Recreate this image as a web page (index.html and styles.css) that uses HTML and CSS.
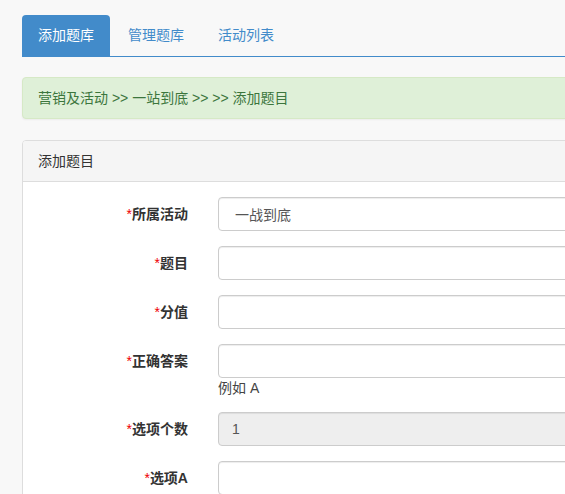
FILE: index.html
```html
<!DOCTYPE html>
<html>
<head>
  <meta charset="UTF-8">
  <title>添加题目</title>
  <link rel="stylesheet" href="styles.css">
</head>
<body>
  <div class="page">
    <ul class="tabs">
      <li class="active"><a href="#">添加题库</a></li>
      <li><a href="#">管理题库</a></li>
      <li><a href="#">活动列表</a></li>
    </ul>

    <div class="alert">营销及活动 &gt;&gt; 一站到底 &gt;&gt; &gt;&gt; 添加题目</div>

    <div class="panel">
      <div class="panel-heading">添加题目</div>
      <div class="panel-body">
        <form class="form">
          <div class="form-group">
            <label><span class="req">*</span>所属活动</label>
            <div class="field"><input type="text" value="一战到底"></div>
          </div>
          <div class="form-group">
            <label><span class="req">*</span>题目</label>
            <div class="field"><input type="text"></div>
          </div>
          <div class="form-group">
            <label><span class="req">*</span>分值</label>
            <div class="field"><input type="text"></div>
          </div>
          <div class="form-group">
            <label><span class="req">*</span>正确答案</label>
            <div class="field">
              <input type="text">
              <div class="help">例如 A</div>
            </div>
          </div>
          <div class="form-group">
            <label><span class="req">*</span>选项个数</label>
            <div class="field"><input type="text" value="1" disabled></div>
          </div>
          <div class="form-group">
            <label><span class="req">*</span>选项A</label>
            <div class="field"><input type="text"></div>
          </div>
        </form>
      </div>
    </div>
  </div>
</body>
</html>
```

FILE: styles.css
```css
html, body { margin: 0; overflow: hidden; }
body {
  font-family: "Liberation Sans", "Noto Sans CJK SC", sans-serif;
  font-size: 14px;
  line-height: 20px;
  color: #333;
  background: #f8f8f8;
}
.page { width: 1100px; padding: 15px 0 0 22px; }

.tabs { list-style: none; margin: 0; padding: 0; display: flex; border-bottom: 1px solid #428bca; }
.tabs li { margin-right: 2px; }
.tabs a { display: block; padding: 10px 16px 11px; color: #428bca; text-decoration: none; border-radius: 4px 4px 0 0; }
.tabs .active a { background: #428bca; color: #fff; }

.alert {
  margin-top: 20px;
  padding: 10px 15px;
  background: #dff0d8;
  border: 1px solid #d6e9c6;
  border-radius: 4px;
  color: #3c763d;
  box-shadow: 0 1px 2px rgba(0, 0, 0, 0.05);
}

.panel { margin-top: 21px; background: #fff; border: 1px solid #ddd; border-radius: 4px; }
.panel-heading { padding: 10px 15px; background: #f5f5f5; border-bottom: 1px solid #ddd; border-radius: 3px 3px 0 0; }
.panel-body { padding: 15px; }

.form-group { display: grid; grid-template-columns: 150px 1fr; column-gap: 30px; margin-bottom: 15px; }
.form-group label { text-align: right; font-weight: bold; padding-top: 7px; }
.req { color: #e00; font-weight: normal; }
.field input {
  box-sizing: border-box;
  width: 100%;
  height: 34px;
  padding: 6px 16px;
  font: inherit;
  color: #555;
  background: #fff;
  border: 1px solid #ccc;
  border-radius: 4px;
  box-shadow: inset 0 1px 1px rgba(0, 0, 0, 0.075);
}
.field input:disabled { background: #eee; padding-left: 13px; }
.help { margin-top: 2px; line-height: 17px; color: #444; }
```
